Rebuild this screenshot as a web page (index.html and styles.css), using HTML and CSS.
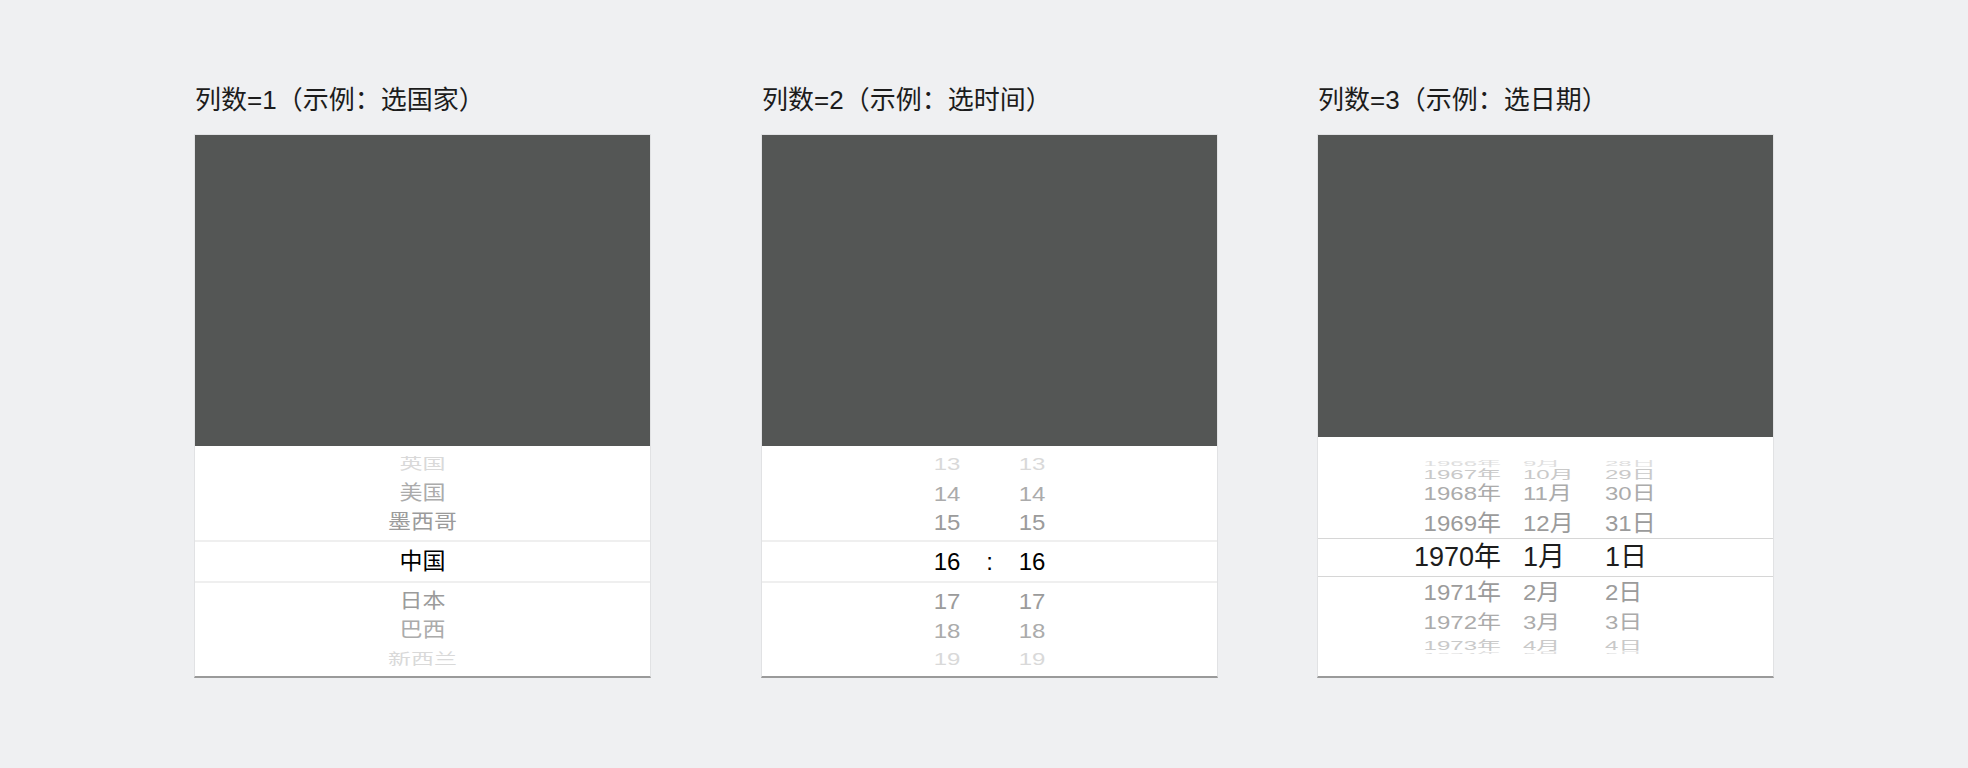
FILE: index.html
```html
<!DOCTYPE html>
<html lang="zh-CN">
<head>
  <meta charset="UTF-8">
  <meta name="viewport" content="width=device-width, initial-scale=1.0">
  <title>选择器列数示例</title>
  <link rel="stylesheet" href="styles.css">
</head>
<body>
  <main class="gallery">
    <!-- 单列：国家 -->
    <section class="demo">
      <h2 class="demo-title">列数=1（示例：选国家）</h2>
      <div class="device">
        <div class="device-screen"></div>
        <div class="picker picker-country">
          <div class="wheel">
            <div class="wheel-above">
              <div class="wheel-item is-far"><span>英国</span></div>
              <div class="wheel-item is-mid"><span>美国</span></div>
              <div class="wheel-item is-near"><span>墨西哥</span></div>
            </div>
            <div class="wheel-current"><span>中国</span></div>
            <div class="wheel-below">
              <div class="wheel-item is-near"><span>日本</span></div>
              <div class="wheel-item is-mid"><span>巴西</span></div>
              <div class="wheel-item is-far"><span>新西兰</span></div>
            </div>
          </div>
        </div>
      </div>
    </section>

    <!-- 两列：时 / 分 -->
    <section class="demo demo-time">
      <h2 class="demo-title">列数=2（示例：选时间）</h2>
      <div class="device">
        <div class="device-screen"></div>
        <div class="picker picker-time">
          <div class="wheel">
            <div class="wheel-above">
              <div class="wheel-item is-far"><span>13</span><span></span><span>13</span></div>
              <div class="wheel-item is-mid"><span>14</span><span></span><span>14</span></div>
              <div class="wheel-item is-near"><span>15</span><span></span><span>15</span></div>
            </div>
            <div class="wheel-current"><span>16</span><span>:</span><span>16</span></div>
            <div class="wheel-below">
              <div class="wheel-item is-near"><span>17</span><span></span><span>17</span></div>
              <div class="wheel-item is-mid"><span>18</span><span></span><span>18</span></div>
              <div class="wheel-item is-far"><span>19</span><span></span><span>19</span></div>
            </div>
          </div>
        </div>
      </div>
    </section>

    <!-- 三列：年 / 月 / 日 -->
    <section class="demo demo-date">
      <h2 class="demo-title">列数=3（示例：选日期）</h2>
      <div class="device">
        <div class="device-screen"></div>
        <div class="picker picker-date">
          <div class="wheel">
            <div class="wheel-above">
              <div class="wheel-item is-edge"><span>1966年</span><span>9月</span><span>28日</span></div>
              <div class="wheel-item is-far"><span>1967年</span><span>10月</span><span>29日</span></div>
              <div class="wheel-item is-mid"><span>1968年</span><span>11月</span><span>30日</span></div>
              <div class="wheel-item is-near"><span>1969年</span><span>12月</span><span>31日</span></div>
            </div>
            <div class="wheel-current"><span>1970年</span><span>1月</span><span>1日</span></div>
            <div class="wheel-below">
              <div class="wheel-item is-near"><span>1971年</span><span>2月</span><span>2日</span></div>
              <div class="wheel-item is-mid"><span>1972年</span><span>3月</span><span>3日</span></div>
              <div class="wheel-item is-far"><span>1973年</span><span>4月</span><span>4日</span></div>
              <div class="wheel-item is-edge"><span>1974年</span><span>5月</span><span>5日</span></div>
            </div>
          </div>
        </div>
      </div>
    </section>
  </main>
</body>
</html>
```

FILE: styles.css
```css
body {
  margin: 0;
  background-color: #eff0f2;
  font-family: "Liberation Sans", "Noto Sans CJK SC", sans-serif;
  color: #1c1c1c;
}
.gallery {
  display: flex;
  align-items: flex-start;
  padding: 82px 0 0 194px;
}
.demo {
  width: 457px;
}
.demo-time {
  margin-left: 110px;
}
.demo-date {
  margin-left: 99px;
}
.demo-title {
  margin: 0 0 16px;
  padding-left: 1px;
  font-size: 26px;
  font-weight: normal;
  line-height: 36px;
  white-space: nowrap;
}

/* 手机外框：深色屏幕 + 底部选择器 */
.device {
  border: 1px solid #e1e2e4;
  border-bottom: 2px solid #9a9a9a;
  background: #ffffff;
}
.device-screen {
  height: 311px;
  background-color: #545655;
}
.picker {
  height: 230px;
  background: #ffffff;
}

/* 滚轮 */
.wheel {
  display: flex;
  flex-direction: column;
}
.wheel > * {
  flex: none;
}
.wheel-above,
.wheel-below {
  display: flex;
  flex-direction: column;
}
.wheel-above {
  height: 94px;
  justify-content: flex-end;
  padding-bottom: 3px;
  box-sizing: border-box;
}
.wheel-below {
  padding-top: 4px;
}
.wheel-item,
.wheel-current {
  flex: none;
  display: grid;
  align-items: center;
  justify-content: center;
  line-height: 1;
  font-size: 23px;
  white-space: nowrap;
}
.wheel-item {
  height: 29px;
}
.wheel-current {
  height: 43px;
  box-sizing: border-box;
  border-top: 2px solid #efefef;
  border-bottom: 2px solid #efefef;
  color: #000000;
}
.wheel-item.is-near {
  color: #9b9b9b;
  transform: scaleY(0.89);
}
.wheel-item.is-mid {
  color: #ababab;
  transform: scaleY(0.88);
}
.wheel-item.is-far {
  color: #d9d9d9;
  transform: scaleY(0.66);
}

/* 时间：时 : 分 */
.picker-time .wheel-item,
.picker-time .wheel-current {
  grid-template-columns: 60px 25px 60px;
  font-size: 24px;
  text-align: center;
}

/* 日期：年 月 日 */
.picker-date {
  height: 239px;
  padding-top: 23px;
  box-sizing: border-box;
}
.demo-date .device-screen {
  height: 302px;
}
.picker-date .wheel {
  height: 194px;
  overflow: hidden;
}
.picker-date .wheel-above {
  height: 78px;
  padding-bottom: 0;
}
.picker-date .wheel-below {
  padding-top: 0;
}
.picker-date .wheel-item,
.picker-date .wheel-current {
  grid-template-columns: 132px 82px 80px;
  justify-content: start;
  padding-left: 73px;
  font-size: 24px;
}
.picker-date .wheel-item span:first-child,
.picker-date .wheel-current span:first-child {
  text-align: right;
  padding-right: 22px;
}
.picker-date .wheel-current {
  height: 39px;
  font-size: 27px;
  border-top: 1px solid #d6d6d6;
  border-bottom: 1px solid #d6d6d6;
  color: #1d1d1d;
}
.picker-date .wheel-item.is-near {
  height: 30.5px;
  transform: scaleY(0.95);
}
.picker-date .wheel-item.is-mid {
  height: 29px;
  transform: scaleY(0.8);
}
.picker-date .wheel-item.is-far {
  height: 12.5px;
  color: #c9c9c9;
  transform: scaleY(0.5);
}
.picker-date .wheel-item.is-edge {
  height: 9px;
  color: #dedede;
  transform: scaleY(0.32);
}
```
